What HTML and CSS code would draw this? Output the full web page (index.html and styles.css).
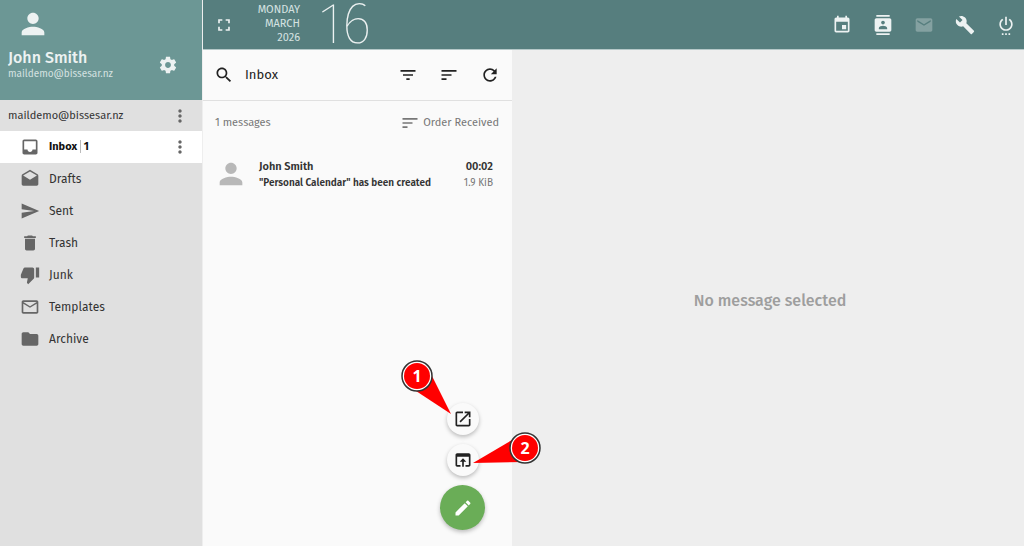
FILE: index.html
```html
<!DOCTYPE html>
<html lang="en">
<head>
  <meta charset="UTF-8">
  <meta name="viewport" content="width=device-width, initial-scale=1.0">
  <title>Inbox</title>
  <link rel="stylesheet" href="styles.css">
</head>
<body>
  <aside class="sidebar">
    <div class="profile">
      <svg class="avatar" viewBox="0 0 24 24"><path d="M12 12c2.210 0 4-1.790 4-4s-1.790-4-4-4-4 1.790-4 4 1.790 4 4 4zm0 2c-2.670 0-8 1.340-8 4v2h16v-2c0-2.660-5.330-4-8-4z"/></svg>
      <div class="profile-row">
        <div>
          <div class="profile-name">John Smith</div>
          <div class="profile-mail">maildemo@bissesar.nz</div>
        </div>
        <button class="icon-btn" aria-label="Preferences">
          <svg viewBox="0 0 24 24"><path d="M19.430 12.980c.04-.32.07-.64.07-.98s-.03-.66-.07-.98l2.110-1.650c.19-.15.24-.42.12-.64l-2-3.460c-.12-.22-.39-.3-.61-.22l-2.490 1c-.52-.4-1.080-.73-1.690-.98l-.38-2.650C14.460 2.180 14.250 2 14 2h-4c-.25 0-.46.18-.49.42l-.38 2.650c-.61.25-1.170.59-1.690.98l-2.490-1c-.23-.09-.49 0-.61.22l-2 3.460c-.13.22-.07.49.12.64l2.110 1.650c-.04.32-.07.65-.07.98s.03.66.07.98l-2.110 1.650c-.19.15-.24.42-.12.64l2 3.460c.12.22.39.3.61.22l2.490-1c.52.4 1.080.73 1.690.98l.38 2.650c.03.24.24.42.49.42h4c.25 0 .46-.18.49-.42l.38-2.650c.61-.25 1.170-.59 1.690-.98l2.490 1c.23.09.49 0 .61-.22l2-3.460c.12-.22.07-.49-.12-.64l-2.110-1.650zM12 15.500c-1.930 0-3.500-1.570-3.500-3.500s1.570-3.500 3.500-3.500 3.500 1.570 3.500 3.500-1.570 3.500-3.500 3.500z"/></svg>
        </button>
      </div>
    </div>

    <div class="account">
      <span>maildemo@bissesar.nz</span>
      <button class="icon-btn" aria-label="Account options">
        <svg viewBox="0 0 24 24"><path d="M12 8c1.100 0 2-.9 2-2s-.9-2-2-2-2 .9-2 2 .9 2 2 2zm0 2c-1.100 0-2 .9-2 2s.9 2 2 2 2-.9 2-2-.9-2-2-2zm0 6c-1.100 0-2 .9-2 2s.9 2 2 2 2-.9 2-2-.9-2-2-2z"/></svg>
      </button>
    </div>

    <nav class="folders">
      <div class="folder active">
        <a href="#inbox">
          <svg viewBox="0 0 24 24"><path d="M19 3H5c-1.100 0-2 .9-2 2v14c0 1.100.89 2 2 2h14c1.100 0 2-.9 2-2V5c0-1.100-.9-2-2-2zm0 12h-4c0 1.660-1.350 3-3 3s-3-1.340-3-3H5V5h14v10z"/></svg>
          <span>Inbox <span class="count">1</span></span>
        </a>
        <button class="icon-btn" aria-label="Folder options">
          <svg viewBox="0 0 24 24"><path d="M12 8c1.100 0 2-.9 2-2s-.9-2-2-2-2 .9-2 2 .9 2 2 2zm0 2c-1.100 0-2 .9-2 2s.9 2 2 2 2-.9 2-2-.9-2-2-2zm0 6c-1.100 0-2 .9-2 2s.9 2 2 2 2-.9 2-2-.9-2-2-2z"/></svg>
        </button>
      </div>
      <div class="folder">
        <a href="#drafts">
          <svg viewBox="0 0 24 24"><path d="M21.990 8c0-.72-.37-1.350-.94-1.700L12 1 2.950 6.300C2.380 6.650 2 7.280 2 8v10c0 1.100.9 2 2 2h16c1.100 0 2-.9 2-2l-.01-10zM12 13L3.740 7.840 12 3l8.260 4.840L12 13z"/></svg>
          <span>Drafts</span>
        </a>
      </div>
      <div class="folder">
        <a href="#sent">
          <svg viewBox="0 0 24 24"><path d="M2 21l21-9L2 3v7l15 2-15 2z"/></svg>
          <span>Sent</span>
        </a>
      </div>
      <div class="folder">
        <a href="#trash">
          <svg viewBox="0 0 24 24"><path d="M6 19c0 1.100.9 2 2 2h8c1.100 0 2-.9 2-2V7H6v12zM19 4h-3.500l-1-1h-5l-1 1H5v2h14V4z"/></svg>
          <span>Trash</span>
        </a>
      </div>
      <div class="folder">
        <a href="#junk">
          <svg viewBox="0 0 24 24"><path d="M15 3H6c-.83 0-1.540.5-1.840 1.220l-3.020 7.050c-.09.23-.14.47-.14.73v2c0 1.100.9 2 2 2h6.310l-.95 4.570-.03.32c0 .41.17.79.44 1.060L9.830 23l6.590-6.590c.36-.36.58-.86.58-1.410V5c0-1.100-.9-2-2-2zm4 0v12h4V3h-4z"/></svg>
          <span>Junk</span>
        </a>
      </div>
      <div class="folder">
        <a href="#templates">
          <svg viewBox="0 0 24 24"><path d="M20 4H4c-1.100 0-2 .9-2 2v12c0 1.100.9 2 2 2h16c1.100 0 2-.9 2-2V6c0-1.100-.9-2-2-2zm0 14H4V8l8 5 8-5v10zm-8-7L4 6h16l-8 5z"/></svg>
          <span>Templates</span>
        </a>
      </div>
      <div class="folder">
        <a href="#archive">
          <svg viewBox="0 0 24 24"><path d="M10 4H4c-1.100 0-2 .9-2 2v12c0 1.100.9 2 2 2h16c1.100 0 2-.9 2-2V8c0-1.100-.9-2-2-2h-8l-2-2z"/></svg>
          <span>Archive</span>
        </a>
      </div>
    </nav>
  </aside>

  <div class="main">
    <header class="topbar">
      <button class="icon-btn" aria-label="Full screen">
        <svg viewBox="0 0 24 24"><path d="M7 14H5v5h5v-2H7v-3zm-2-4h2V7h3V5H5v5zm12 7h-3v2h5v-5h-2v3zM14 5v2h3v3h2V5h-5z"/></svg>
      </button>
      <div class="date">
        <div>MONDAY</div>
        <div>MARCH</div>
        <div>2026</div>
      </div>
      <div class="day">16</div>
      <nav class="modules">
        <a href="#calendar" aria-label="Calendar"><svg viewBox="0 0 24 24"><path d="M19 3h-1V1h-2v2H8V1H6v2H5c-1.100 0-2 .9-2 2v14c0 1.100.9 2 2 2h14c1.100 0 2-.9 2-2V5c0-1.100-.9-2-2-2zm0 16H5V8h14v11zM17 12h-5v5h5v-5z"/></svg></a>
        <a href="#contacts" aria-label="Address Book"><svg viewBox="0 0 24 24"><path d="M20 0H4v2h16V0zM4 24h16v-2H4v2zM20 4H4c-1.100 0-2 .9-2 2v12c0 1.100.9 2 2 2h16c1.100 0 2-.9 2-2V6c0-1.100-.9-2-2-2zm-8 2.750c1.240 0 2.250 1.010 2.250 2.250s-1.010 2.250-2.250 2.250S9.750 10.240 9.750 9 10.760 6.750 12 6.750zM17 17H7v-1.500c0-1.670 3.330-2.500 5-2.500s5 .83 5 2.500V17z"/></svg></a>
        <a href="#mail" class="current" aria-label="Mail"><svg viewBox="0 0 24 24"><path d="M20 4H4c-1.100 0-1.990.9-1.990 2L2 18c0 1.100.9 2 2 2h16c1.100 0 2-.9 2-2V6c0-1.100-.9-2-2-2zm0 4l-8 5-8-5V6l8 5 8-5v2z"/></svg></a>
        <a href="#admin" aria-label="Administration"><svg viewBox="0 0 24 24"><path d="M22.700 19l-9.100-9.100c.9-2.300.4-5-1.500-6.900-2-2-5-2.400-7.400-1.300L9 6 6 9 1.600 4.700C.4 7.100.9 10.100 2.900 12.100c1.900 1.900 4.600 2.400 6.900 1.500l9.100 9.100c.4.4 1 .4 1.400 0l2.300-2.300c.5-.4.5-1.100.1-1.400z"/></svg></a>
        <a href="#logout" aria-label="Disconnect"><svg viewBox="0 0 24 24"><path d="M7 24h2v-2H7v2zm4 0h2v-2h-2v2zm2-22h-2v10h2V2zm3.560 2.440l-1.450 1.450C16.840 6.940 18 8.830 18 11c0 3.310-2.690 6-6 6s-6-2.690-6-6c0-2.170 1.160-4.060 2.880-5.120L7.440 4.440C5.360 5.880 4 8.280 4 11c0 4.420 3.580 8 8 8s8-3.580 8-8c0-2.720-1.360-5.120-3.440-6.560zM15 24h2v-2h-2v2z"/></svg></a>
      </nav>
    </header>

    <div class="content">
      <section class="list">
        <div class="toolbar">
          <button class="icon-btn" aria-label="Search">
            <svg viewBox="0 0 24 24"><path d="M15.500 14h-.79l-.28-.27C15.410 12.590 16 11.110 16 9.500 16 5.910 13.090 3 9.500 3S3 5.910 3 9.500 5.910 16 9.500 16c1.610 0 3.090-.59 4.230-1.570l.27.28v.79l5 4.990L20.490 19l-4.990-5zm-6 0C7.010 14 5 11.990 5 9.500S7.010 5 9.500 5 14 7.010 14 9.500 11.990 14 9.500 14z"/></svg>
          </button>
          <h1>Inbox</h1>
          <div class="tools">
            <button class="icon-btn" aria-label="Filter"><svg viewBox="0 0 24 24"><path d="M10 18h4v-2h-4v2zM3 6v2h18V6H3zm3 7h12v-2H6v2z"/></svg></button>
            <button class="icon-btn" aria-label="Sort"><svg viewBox="0 0 24 24"><path d="M3 18h6v-2H3v2zM3 6v2h18V6H3zm0 7h12v-2H3v2z"/></svg></button>
            <button class="icon-btn" aria-label="Refresh"><svg viewBox="0 0 24 24"><path d="M17.650 6.350C16.200 4.900 14.210 4 12 4c-4.420 0-7.990 3.580-7.990 8s3.570 8 7.990 8c3.730 0 6.840-2.550 7.730-6h-2.080c-.82 2.330-3.040 4-5.650 4-3.310 0-6-2.690-6-6s2.690-6 6-6c1.660 0 3.140.69 4.220 1.780L13 11h7V4l-2.350 2.350z"/></svg></button>
          </div>
        </div>

        <div class="summary">
          <span>1 messages</span>
          <span class="order">
            <svg viewBox="0 0 24 24"><path d="M3 18h6v-2H3v2zM3 6v2h18V6H3zm0 7h12v-2H3v2z"/></svg>
            Order Received
          </span>
        </div>

        <article class="message">
          <svg class="sender" viewBox="0 0 24 24"><path d="M12 12c2.210 0 4-1.790 4-4s-1.790-4-4-4-4 1.790-4 4 1.790 4 4 4zm0 2c-2.670 0-8 1.340-8 4v2h16v-2c0-2.660-5.330-4-8-4z"/></svg>
          <div class="message-text">
            <div class="from">John Smith</div>
            <div class="subject">"Personal Calendar" has been created</div>
          </div>
          <div class="message-info">
            <div class="time">00:02</div>
            <div class="size">1.9 KiB</div>
          </div>
        </article>

        <div class="compose">
          <button class="fab small" aria-label="New message in a window">
            <svg viewBox="0 0 24 24"><path d="M19 19H5V5h7V3H5c-1.110 0-2 .9-2 2v14c0 1.100.89 2 2 2h14c1.100 0 2-.9 2-2v-7h-2v7zM14 3v2h3.590l-9.830 9.830 1.410 1.410L19 6.410V10h2V3h-7z"/></svg>
          </button>
          <button class="fab small" aria-label="New message here">
            <svg viewBox="0 0 24 24"><path d="M19 4H5c-1.110 0-2 .9-2 2v12c0 1.100.89 2 2 2h4v-2H5V8h14v10h-4v2h4c1.100 0 2-.9 2-2V6c0-1.100-.89-2-2-2zm-7 6l-4 4h3v6h2v-6h3l-4-4z"/></svg>
          </button>
          <button class="fab" aria-label="Write a new message">
            <svg viewBox="0 0 24 24"><path d="M3 17.250V21h3.750L17.810 9.940l-3.750-3.750L3 17.250zM20.710 7.040c.39-.39.39-1.020 0-1.410l-2.340-2.340c-.39-.39-1.020-.39-1.410 0l-1.830 1.830 3.750 3.750 1.830-1.830z"/></svg>
          </button>
          <svg class="callouts" viewBox="0 0 144 110">
            <path class="pointer" d="M16 33L51 56L31 16z"/>
            <circle class="ring" cx="17" cy="18" r="15"/>
            <circle class="disc" cx="17" cy="18" r="13"/>
            <text x="17" y="24">1</text>
            <path class="pointer" d="M73 105L125 104L112 82z"/>
            <circle class="ring" cx="125" cy="90" r="15"/>
            <circle class="disc" cx="125" cy="90" r="13"/>
            <text x="125" y="96">2</text>
          </svg>
        </div>
      </section>

      <main class="viewer">
        <p>No message selected</p>
      </main>
    </div>
  </div>
</body>
</html>
```
FILE: styles.css
```css
* {
  box-sizing: border-box;
}

body {
  margin: 0;
  display: flex;
  height: 100vh;
  overflow: hidden;
  font-family: "Fira Sans", "Noto Sans", sans-serif;
  font-size: 11px;
  line-height: 16px;
  color: #333;
  background: #eee;
}

svg {
  display: block;
  width: 20px;
  height: 20px;
  flex-shrink: 0;
  fill: currentColor;
}

a {
  color: inherit;
  text-decoration: none;
}

.icon-btn {
  padding: 0;
  border: 0;
  background: none;
  color: inherit;
  cursor: pointer;
}

/* sidebar */
.sidebar {
  flex: 0 0 203px;
  background: #e0e0e0;
  border-right: 1px solid #eee;
}

.profile {
  height: 100px;
  padding: 7px 24px 0 8px;
  background: #6c9795;
  color: #edf2f2;
}

.avatar {
  width: 34px;
  height: 34px;
  margin-left: 8px;
}

.profile-row {
  display: flex;
  justify-content: space-between;
  align-items: center;
  margin-top: 8px;
}

.profile-name {
  font-size: 16px;
  line-height: 18px;
  font-weight: 500;
}

.profile-mail {
  font-size: 10px;
  line-height: 14px;
  color: #d5e2e1;
}

.account {
  display: flex;
  align-items: center;
  justify-content: space-between;
  height: 31px;
  padding: 0 12px 0 8px;
}

.account .icon-btn,
.folder .icon-btn {
  color: #666;
}

.folder {
  display: flex;
  align-items: center;
  height: 32px;
  padding: 0 12px 0 20px;
}

.folder a {
  flex: 1;
  display: flex;
  align-items: center;
  gap: 9px;
  font-size: 12px;
}

.folder a svg {
  color: #666;
}

.folder.active {
  background: #fff;
  color: #111;
}

.folder.active a {
  font-size: 11px;
  font-weight: 700;
}

.count {
  padding-left: 3px;
  border-left: 1px solid #bbb;
}

/* top bar */
.main {
  flex: 1;
  display: flex;
  flex-direction: column;
  min-width: 0;
}

.topbar {
  display: flex;
  align-items: center;
  height: 50px;
  padding: 0 8px 0 11px;
  background: #567e7e;
  border-bottom: 1px solid #b5c8c8;
  color: #edf2f2;
}

.date {
  width: 66px;
  padding-bottom: 2px;
  line-height: 14px;
  text-align: right;
  color: #d5e2e1;
}

.day {
  margin-left: 19px;
  padding-bottom: 1px;
  font-size: 58px;
  line-height: 48px;
  font-weight: 100;
}

.modules {
  display: flex;
  gap: 21px;
  margin-left: auto;
}

.modules .current {
  opacity: 0.3;
}

/* message list */
.content {
  flex: 1;
  display: flex;
  min-height: 0;
}

.list {
  position: relative;
  flex: 0 0 309px;
  background: #fafafa;
}

.toolbar {
  display: flex;
  align-items: center;
  height: 51px;
  padding: 0 12px 0 11px;
  border-bottom: 1px solid #e0e0e0;
  color: #222;
}

.toolbar h1 {
  margin: 0 0 0 11px;
  font-size: 13px;
  font-weight: 400;
}

.tools {
  display: flex;
  gap: 21px;
  margin-left: auto;
}

.summary {
  display: flex;
  align-items: center;
  justify-content: space-between;
  height: 43px;
  padding: 0 13px 0 12px;
  color: #777;
}

.order {
  display: flex;
  align-items: center;
  gap: 3px;
}

.message {
  display: flex;
  align-items: center;
  height: 60px;
  padding: 0 19px 0 11px;
}

.sender {
  width: 34px;
  height: 34px;
  color: #b8b8b8;
}

.message-text {
  flex: 1;
  margin-left: 11px;
  font-weight: 600;
  white-space: nowrap;
}

.from,
.time {
  line-height: 17px;
}

.subject,
.size {
  font-size: 10px;
  line-height: 16px;
}

.message-info {
  text-align: right;
}

.time {
  font-weight: 600;
}

.size {
  color: #777;
}

/* compose buttons */
.compose {
  position: absolute;
  right: 27px;
  bottom: 16px;
  display: flex;
  flex-direction: column;
  align-items: center;
  gap: 9px;
}

.fab {
  display: flex;
  align-items: center;
  justify-content: center;
  width: 45px;
  height: 45px;
  padding: 0;
  border: 0;
  border-radius: 50%;
  background: #6aad57;
  color: #fff;
  box-shadow: 0 2px 4px rgba(0, 0, 0, 0.25);
}

.fab.small {
  width: 32px;
  height: 32px;
  background: #fafafa;
  color: #222;
}

.callouts {
  position: absolute;
  left: -40px;
  top: -45px;
  width: 144px;
  height: 110px;
  pointer-events: none;
}

.pointer,
.disc {
  fill: #f00;
}

.ring {
  fill: #fff;
  stroke: #333;
  stroke-width: 1.5;
}

.callouts text {
  fill: #fff;
  font-family: "Open Sans", sans-serif;
  font-size: 16px;
  font-weight: 700;
  text-anchor: middle;
}

/* viewer */
.viewer {
  flex: 1;
  display: flex;
  align-items: center;
  justify-content: center;
  padding: 5px 0 0 4px;
  background: #eee;
}

.viewer p {
  margin: 0;
  font-size: 16px;
  line-height: 20px;
  font-weight: 500;
  color: #9e9e9e;
}
```
